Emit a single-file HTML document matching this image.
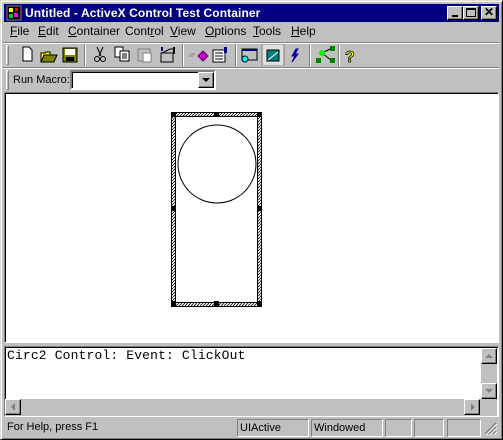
<!DOCTYPE html>
<html><head><style>
*{margin:0;padding:0;box-sizing:border-box}
body{width:503px;height:440px;background:#c0c0c0;position:relative;overflow:hidden;font-family:"Liberation Sans",sans-serif;font-size:11px;color:#000}
.a{position:absolute}
.raised{background:#c0c0c0;border:1px solid;border-color:#fff #000 #000 #fff;box-shadow:inset -1px -1px #808080}
.menu span{position:absolute;top:0}
.menu u{text-decoration:underline}
.sep{position:absolute;width:2px;height:22px;border-left:1px solid #808080;border-right:1px solid #fff}
.grip{position:absolute;width:3px;height:20px;border:1px solid;border-color:#fff #808080 #808080 #fff}
.pane{position:absolute;top:419px;height:18px;border:1px solid;border-color:#808080 #fff #fff #808080;padding-left:2px;line-height:16px;font-size:11px}
</style></head><body>
<div class="a" style="left:0;top:0;width:503px;height:440px;border:1px solid;border-color:#dfdfdf #000 #000 #dfdfdf;box-shadow:inset 1px 1px #fff,inset -1px -1px #808080"></div>
<div class="a" style="left:4px;top:4px;width:495px;height:18px;background:#000080"></div>
<svg class="a" style="left:6px;top:5px" width="16" height="16"><rect x="1" y="1" width="14" height="14" fill="#000" stroke="#808080"/><rect x="3" y="3" width="4" height="4" fill="#ff0"/><rect x="8" y="8" width="4" height="4" fill="#f0f"/><rect x="3" y="9" width="4" height="4" fill="#0c0"/><rect x="9" y="3" width="3" height="3" fill="#f00"/></svg>
<div class="a" style="left:25px;top:5px;color:#fff;font-weight:bold;font-size:12px;line-height:16px;letter-spacing:0.1px">Untitled - ActiveX Control Test Container</div>
<div class="a raised" style="left:447px;top:6px;width:16px;height:14px"><div class="a" style="left:4px;top:8px;width:6px;height:2px;background:#000"></div></div>
<div class="a raised" style="left:463px;top:6px;width:16px;height:14px"><div class="a" style="left:2px;top:1px;width:10px;height:9px;border:1px solid #000;border-top-width:2px"></div></div>
<div class="a raised" style="left:481px;top:6px;width:16px;height:14px;font-weight:bold;font-size:12px;line-height:11px;text-align:center">✕</div>
<div class="a menu" style="left:0;top:24px;width:503px;height:16px;font-size:12px">
<span style="left:10px"><u>F</u>ile</span><span style="left:38px"><u>E</u>dit</span><span style="left:68px"><u>C</u>ontainer</span><span style="left:125px">Cont<u>r</u>ol</span><span style="left:170px"><u>V</u>iew</span><span style="left:205px"><u>O</u>ptions</span><span style="left:253px"><u>T</u>ools</span><span style="left:291px"><u>H</u>elp</span>
</div>
<div class="a" style="left:3px;top:42px;width:496px;height:2px;border-top:1px solid #808080;border-bottom:1px solid #fff"></div>
<div class="grip" style="left:6px;top:45px"></div>
<svg class="a" style="left:14px;top:44px" width="350" height="22">
<path d="M9 3h6l3 3v11H9z" fill="#fff" stroke="#000"/>
<path d="M27 9h4l1-1h4v3h5l-3 7H27z" fill="#ff0" stroke="#000"/><path d="M27 18l3-7h13l-3 7z" fill="#808000" stroke="#000"/>
<rect x="49" y="4" width="14" height="14" fill="#808000" stroke="#000"/><rect x="51" y="5" width="10" height="6" fill="#fff"/><rect x="52" y="13" width="8" height="4" fill="#000"/>
<path d="M83 3l4 9M89 3l-4 9" stroke="#000"/><circle cx="83" cy="15" r="2.5" fill="none" stroke="#000"/><circle cx="89" cy="15" r="2.5" fill="none" stroke="#000"/>
<rect x="101" y="3" width="8" height="10" fill="#fff" stroke="#000"/><rect x="106" y="7" width="9" height="10" fill="#fff" stroke="#000"/><path d="M108 10h5M108 12h5M108 14h5" stroke="#000"/>
<rect x="124" y="5" width="12" height="12" fill="#c0c0c0" stroke="#808080"/><rect x="129" y="9" width="8" height="9" fill="#fff" stroke="#808080"/>
<rect x="147" y="9" width="12" height="9" fill="#c0c0c0" stroke="#000"/><path d="M148 9l8-4h5" stroke="#000" fill="none"/><rect x="147" y="3" width="2" height="4" fill="#000080"/><rect x="159" y="3" width="2" height="7" fill="#000"/>
<path d="M175 12h4M177 10h4" stroke="#808080"/><path d="M184 12l5-5 5 5-5 5z" fill="#c0c" stroke="#606"/>
<rect x="199" y="6" width="12" height="12" fill="#fff" stroke="#000"/><path d="M201 9h8M201 12h8M201 15h8" stroke="#000"/><rect x="210" y="3" width="3" height="6" fill="#000080"/>
<rect x="228" y="5" width="15" height="11" fill="#c0c0c0" stroke="#000"/><rect x="228" y="5" width="15" height="2" fill="#000080"/><circle cx="231" cy="15" r="3" fill="#0ff" stroke="#000"/>
<rect x="248" y="0" width="22" height="22" fill="#e0e0e0" stroke="#808080"/><path d="M253 6h12v11h-12z" fill="#008080" stroke="#000"/><path d="M254 16l10-8" stroke="#fff"/>
<path d="M282 5l-4 7h3l-3 6 6-8h-3l3-5z" fill="#00f" stroke="#000080"/>
<path d="M308 9l10-5M308 9l10 8M308 9h2" stroke="#000" fill="none"/><circle cx="308" cy="9" r="3" fill="#0f0"/><rect x="302" y="14" width="5" height="5" fill="#008000"/><rect x="316" y="2" width="5" height="5" fill="#008000"/><rect x="316" y="14" width="5" height="5" fill="#008000"/>
<text x="331" y="18" font-size="16" font-weight="bold" fill="#ff0" stroke="#000" stroke-width="0.7" font-family="Liberation Sans">?</text>
</svg>
<div class="sep" style="left:84px;top:44px"></div>
<div class="sep" style="left:182px;top:44px"></div>
<div class="sep" style="left:235px;top:44px"></div>
<div class="sep" style="left:309px;top:44px"></div>
<div class="sep" style="left:338px;top:44px"></div>
<div class="a" style="left:3px;top:67px;width:496px;height:2px;border-top:1px solid #808080;border-bottom:1px solid #fff"></div>
<div class="grip" style="left:6px;top:70px"></div>
<div class="a" style="left:13px;top:74px;font-size:11px">Run Macro:</div>
<div class="a" style="left:70px;top:70px;width:146px;height:20px;background:#fff;border:2px solid;border-color:#808080 #fff #fff #808080;box-shadow:inset 1px 1px #000"></div>
<div class="a raised" style="left:198px;top:72px;width:16px;height:16px"><div class="a" style="left:3px;top:5px;border-left:4px solid transparent;border-right:4px solid transparent;border-top:4px solid #000"></div></div>
<div class="a" style="left:4px;top:92px;width:495px;height:251px;background:#fff;border:1px solid;border-color:#808080 #fff #fff #808080;box-shadow:inset 1px 1px #000"></div>
<svg class="a" style="left:170px;top:111px" width="94" height="197">
<defs><pattern id="h" width="3" height="3" patternUnits="userSpaceOnUse"><path d="M0 3L3 0" stroke="#000" stroke-width="0.8"/></pattern></defs>
<rect x="1.5" y="1.5" width="90" height="194" fill="url(#h)" stroke="#000"/>
<rect x="5.5" y="5.5" width="82" height="186" fill="#fff" stroke="#000"/>
<circle cx="47" cy="53" r="39" fill="#fff" stroke="#000"/>
<g fill="#000"><rect x="1" y="1" width="5" height="5"/><rect x="44" y="1" width="5" height="5"/><rect x="87" y="1" width="5" height="5"/><rect x="1" y="95" width="5" height="5"/><rect x="87" y="95" width="5" height="5"/><rect x="1" y="190" width="5" height="5"/><rect x="44" y="190" width="5" height="5"/><rect x="87" y="190" width="5" height="5"/></g>
</svg>
<div class="a" style="left:4px;top:346px;width:495px;height:71px;background:#fff;border:1px solid;border-color:#808080 #fff #fff #808080;box-shadow:inset 1px 1px #000"></div>
<div class="a" style="left:7px;top:348px;font-family:'Liberation Mono',monospace;font-size:13px;line-height:16px;letter-spacing:0.15px">Circ2 Control: Event: ClickOut</div>
<div class="a" style="left:481px;top:348px;width:16px;height:51px;background:#c0c0c0"></div>
<div class="a raised" style="left:481px;top:348px;width:16px;height:16px"><div class="a" style="left:3px;top:5px;border-left:4px solid transparent;border-right:4px solid transparent;border-bottom:4px solid #808080"></div></div>
<div class="a raised" style="left:481px;top:383px;width:16px;height:16px"><div class="a" style="left:3px;top:5px;border-left:4px solid transparent;border-right:4px solid transparent;border-top:4px solid #808080"></div></div>
<div class="a" style="left:5px;top:399px;width:492px;height:17px;background:#c0c0c0"></div>
<div class="a raised" style="left:5px;top:399px;width:16px;height:16px"><div class="a" style="left:5px;top:3px;border-top:4px solid transparent;border-bottom:4px solid transparent;border-right:4px solid #808080"></div></div>
<div class="a raised" style="left:464px;top:399px;width:16px;height:16px"><div class="a" style="left:6px;top:3px;border-top:4px solid transparent;border-bottom:4px solid transparent;border-left:4px solid #808080"></div></div>
<div class="a" style="left:7px;top:421px;font-size:11px">For Help, press F1</div>
<div class="pane" style="left:237px;width:72px">UIActive</div>
<div class="pane" style="left:311px;width:72px">Windowed</div>
<div class="pane" style="left:385px;width:27px"></div>
<div class="pane" style="left:414px;width:30px"></div>
<div class="pane" style="left:447px;width:34px"></div>
<svg class="a" style="left:484px;top:422px" width="14" height="14"><path d="M12 1L1 12M12 5L5 12M12 9L9 12" stroke="#808080" stroke-width="1.5"/><path d="M13 2L2 13M13 6L6 13M13 10L10 13" stroke="#fff"/></svg>
</body></html>
